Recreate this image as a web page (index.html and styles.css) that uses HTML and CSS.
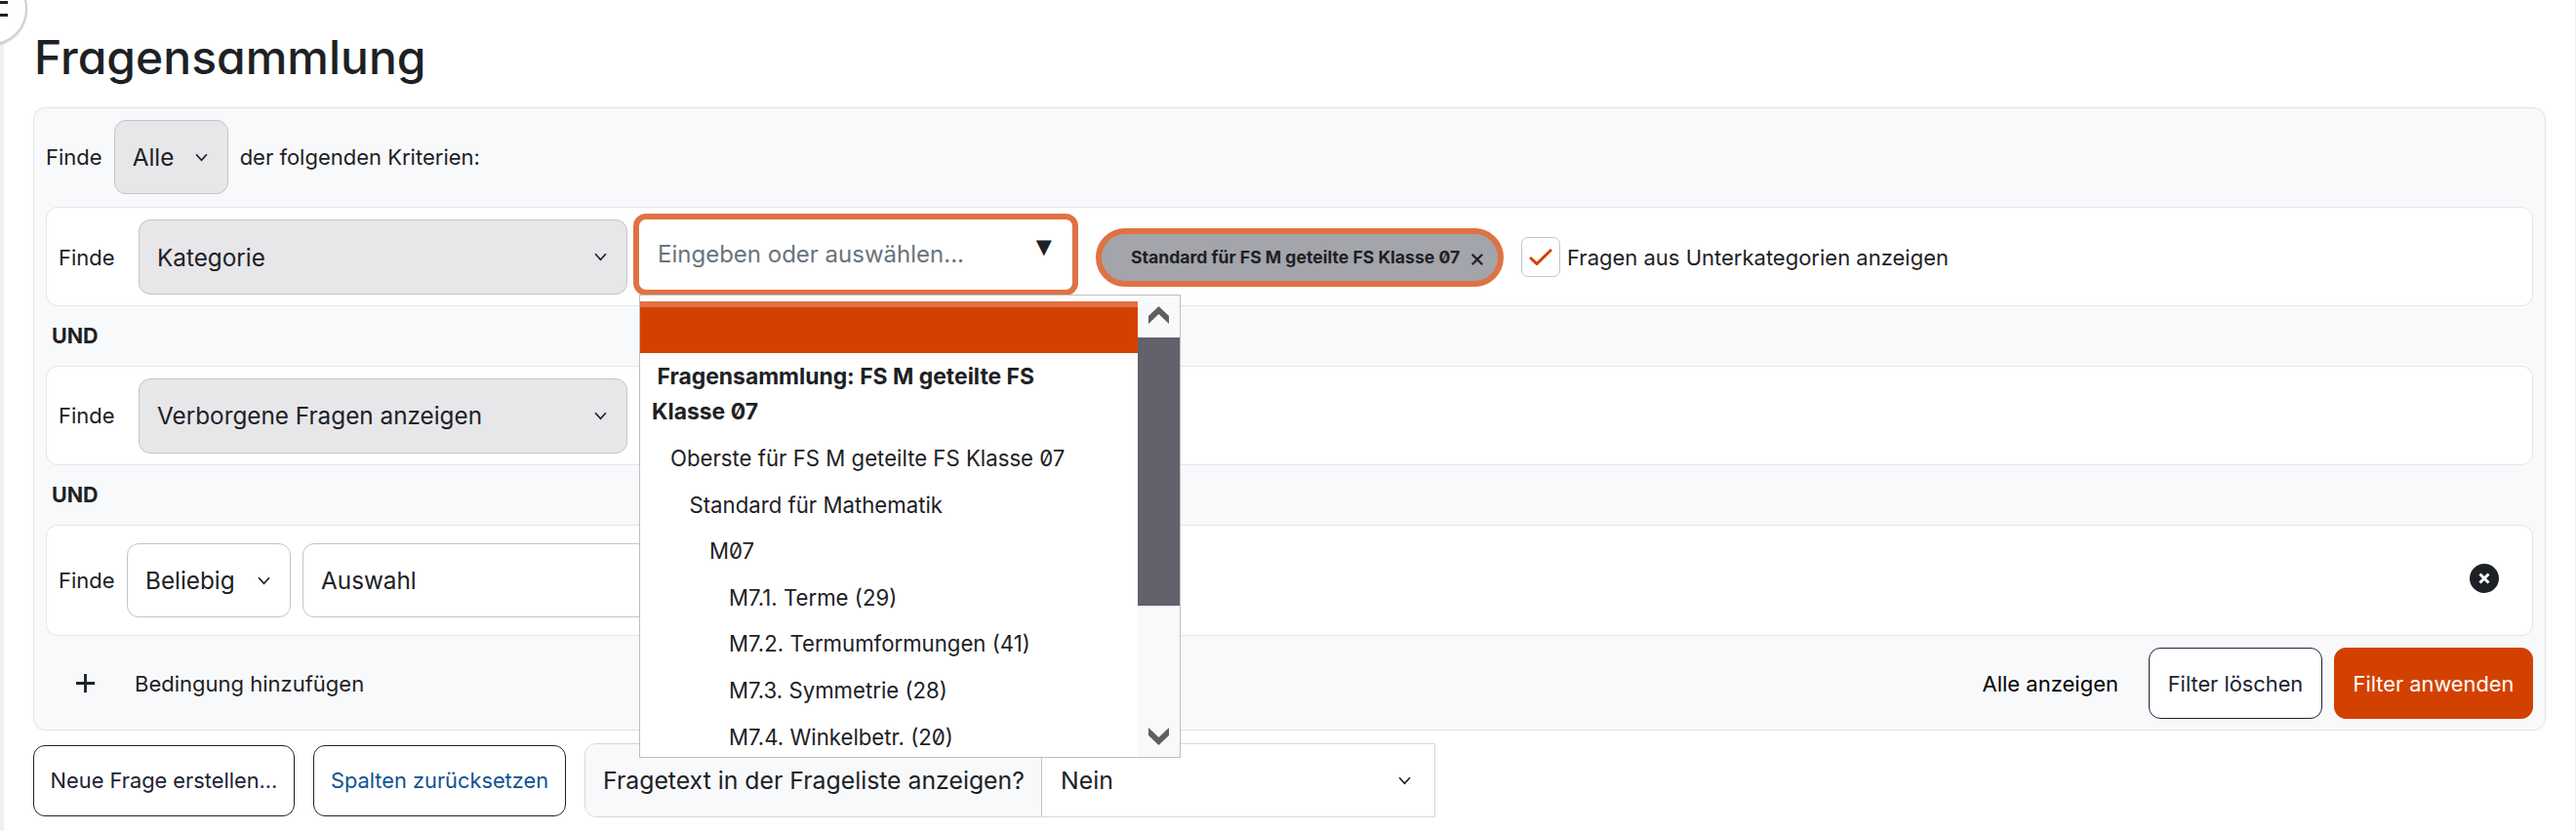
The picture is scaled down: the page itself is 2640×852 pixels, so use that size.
FILE: index.html
```html
<!DOCTYPE html>
<html lang="de">
<head>
<meta charset="utf-8">
<title>Fragensammlung</title>
<link rel="stylesheet" href="styles.css">
</head>
<body>
<button class="fab" aria-label="Menü"><span class="fab-lines"><i></i><i></i><i></i></span></button>
<main class="page">
  <h1 class="title">Fragensammlung</h1>
  <section class="panel">
    <div class="head-row">
      <span class="finde-a">Finde</span>
      <div class="sel sel-grey sel-alle"><span>Alle</span><svg class="chev" viewBox="0 0 12 8"><path d="M1 1l5 5.5L11 1"/></svg></div>
      <span>der folgenden Kriterien:</span>
    </div>
    <div class="card card-one">
      <span class="finde">Finde</span>
      <div class="sel sel-grey sel-wide"><span>Kategorie</span><svg class="chev" viewBox="0 0 12 8"><path d="M1 1l5 5.5L11 1"/></svg></div>
      <div class="combo-wrap">
        <div class="combo"><span class="placeholder">Eingeben oder auswählen...</span><span class="tri">▼</span></div>
        <div class="dropdown">
          <div class="options">
            <div class="opt-selected"></div>
            <div class="opt-group">&nbsp;Fragensammlung: FS M geteilte FS Klasse 07</div>
            <div class="opt lvl1">Oberste für FS M geteilte FS Klasse 07</div>
            <div class="opt lvl2">Standard für Mathematik</div>
            <div class="opt lvl3">M07</div>
            <div class="opt lvl4">M7.1. Terme (29)</div>
            <div class="opt lvl4">M7.2. Termumformungen (41)</div>
            <div class="opt lvl4">M7.3. Symmetrie (28)</div>
            <div class="opt lvl4">M7.4. Winkelbetr. (20)</div>
          </div>
          <div class="scrollbar">
            <div class="sb-btn"><svg class="sb-arrow" viewBox="0 0 21 18"><path d="M0 10L10.5 0 21 10v8L10.5 8 0 18z"/></svg></div>
            <div class="sb-thumb"></div>
            <div class="sb-track"></div>
            <div class="sb-btn sb-btn-down"><svg class="sb-arrow" viewBox="0 0 21 18"><path d="M0 0l10.5 10L21 0v8L10.5 18 0 8z"/></svg></div>
          </div>
        </div>
      </div>
      <div class="chip"><span>Standard für FS M geteilte FS Klasse 07</span><span class="chip-x">×</span></div>
      <div class="check"><svg viewBox="0 0 24 17"><path d="M1 9l7 6.5L23 1"/></svg></div>
      <span class="check-label">Fragen aus Unterkategorien anzeigen</span>
    </div>
    <div class="und">UND</div>
    <div class="card card-two">
      <span class="finde">Finde</span>
      <div class="sel sel-grey sel-wide"><span>Verborgene Fragen anzeigen</span><svg class="chev" viewBox="0 0 12 8"><path d="M1 1l5 5.5L11 1"/></svg></div>
    </div>
    <div class="und">UND</div>
    <div class="card card-three">
      <span class="finde">Finde</span>
      <div class="sel sel-any"><span>Beliebig</span><svg class="chev" viewBox="0 0 12 8"><path d="M1 1l5 5.5L11 1"/></svg></div>
      <div class="sel sel-choice"><span>Auswahl</span></div>
      <svg class="remove" viewBox="0 0 30 30"><circle cx="15" cy="15" r="15"/><path d="M10.5 10.5l9 9M19.5 10.5l-9 9"/></svg>
    </div>
    <div class="foot">
      <svg class="plus" viewBox="0 0 20 20"><path d="M10 0v20M0 10h20"/></svg>
      <span class="add">Bedingung hinzufügen</span>
      <span class="show-all">Alle anzeigen</span>
      <button class="btn btn-clear">Filter löschen</button>
      <button class="btn btn-apply">Filter anwenden</button>
    </div>
  </section>
  <div class="actions">
    <button class="btn btn-new">Neue Frage erstellen...</button>
    <button class="btn btn-reset">Spalten zurücksetzen</button>
    <div class="group">
      <span class="group-label">Fragetext in der Frageliste anzeigen?</span>
      <div class="group-value"><span>Nein</span><svg class="chev" viewBox="0 0 12 8"><path d="M1 1l5 5.5L11 1"/></svg></div>
    </div>
  </div>
</main>
</body>
</html>
```
FILE: styles.css
```css
* { box-sizing: border-box; }
html, body { margin: 0; padding: 0; background: #fff; }
body {
  height: 852px;
  overflow: hidden;
  position: relative;
  font-family: Inter, "Liberation Sans", sans-serif;
  font-size: 22px;
  font-feature-settings: "zero" 1;
  color: #1d2125;
}
.page {
  height: 852px;
  border-left: 4px solid #f1f1f3;
  border-right: 1px solid #f1f1f3;
  padding: 0 30px 0 30px;
}
.fab {
  position: absolute;
  left: -44px;
  top: -28px;
  width: 72px;
  height: 74px;
  border-radius: 50%;
  border: 2px solid #cfd0d2;
  background: #fff;
  box-shadow: 0 1px 2px rgba(0,0,0,.15);
  z-index: 3;
  padding: 0;
}
.fab-lines { position: absolute; left: 42px; top: 14px; display: flex; flex-direction: column; gap: 10px; width: 8px; }
.fab-lines i { display: block; height: 3px; background: #1d2125; }
.title {
  margin: 0;
  height: 110px;
  padding: 31px 0 0 1px;
  font-size: 48px;
  line-height: 56px;
  font-weight: 500;
  font-feature-settings: "cv11" 1;
}
.panel {
  height: 639px;
  border: 1px solid #e3e4e8;
  border-radius: 12px;
  background: #f8f9fa;
  padding: 12px 12px 0;
}
.head-row { display: flex; align-items: center; height: 76px; gap: 12px; margin-bottom: 13px; }
.sel {
  display: flex;
  align-items: center;
  justify-content: space-between;
  height: 77px;
  padding: 0 20px 0 18px;
  border: 1px solid #c2c4c8;
  border-radius: 12px;
  background: #fff;
  font-size: 24.3px;
}
.sel-grey { background: #e7e7ea; }
.sel-alle { width: 117px; height: 76px; }
.sel-wide { width: 501px; }
.sel-any { width: 168px; height: 76px; }
.sel-choice { width: 560px; height: 76px; margin-left: 12px; }
.chev { width: 13px; height: 9px; fill: none; stroke: #1d2125; stroke-width: 1.6; flex: none; }
.card {
  display: flex;
  align-items: center;
  background: #fff;
  border: 1px solid #e3e4e8;
  border-radius: 12px;
  padding: 0 12px;
  position: relative;
}
.card-one { height: 102px; padding-top: 1px; }
.card-two { height: 102px; }
.card-three { height: 114px; }
.finde { width: 82px; flex: none; }
.card-three .finde { width: 70px; }
.und { height: 61px; line-height: 60px; padding-left: 6px; font-weight: 700; font-size: 21.5px; }
.combo-wrap { position: relative; width: 456px; height: 84px; margin-left: 6px; margin-top: -6px; flex: none; }
.combo {
  height: 84px;
  border: 6px solid #df7244;
  border-radius: 13px;
  background: #fff;
  display: flex;
  align-items: center;
  padding: 0 24px 0 19px;
  justify-content: space-between;
}
.placeholder { color: #6a737b; font-size: 24px; }
.tri { font-size: 21px; color: #1d2125; margin-top: -14px; margin-right: -3px; line-height: 1; font-family: "DejaVu Sans", sans-serif; }
.dropdown {
  position: absolute;
  left: 6px;
  top: 83px;
  width: 555px;
  height: 475px;
  background: #fff;
  border: 1px solid #bcbdc1;
  display: flex;
  z-index: 2;
}
.options { flex: 1; overflow: hidden; padding-top: 6px; font-size: 22.2px; }
.opt-selected { height: 53px; background: #d34100; border-top: 6px solid #df7244; }
.opt-group { font-weight: 700; font-size: 22.9px; line-height: 36px; padding: 6px 40px 0 12px; }
.opt { line-height: 47.6px; white-space: nowrap; }
.lvl1 { padding-left: 31px; margin-top: 6.5px; }
.lvl2 { padding-left: 50.5px; }
.lvl3 { padding-left: 71px; }
.lvl4 { padding-left: 91px; }
.scrollbar { width: 43px; background: #f8f9fa; display: flex; flex-direction: column; flex: none; }
.sb-btn { height: 43px; display: flex; justify-content: center; padding-top: 11px; flex: none; }
.sb-btn-down { align-items: flex-start; height: 30px; padding-top: 0; }
.sb-arrow { width: 21px; height: 18px; fill: #5f5f5f; }
.sb-thumb { height: 275px; background: #62626c; flex: none; }
.sb-track { flex: 1; }
.chip {
  display: flex;
  align-items: center;
  width: 418px;
  height: 60px;
  margin-left: 18px;
  padding-left: 30px;
  border: 6px solid #df7244;
  border-radius: 30px;
  background: #a4a4ab;
  font-size: 17.6px;
  font-weight: 700;
  flex: none;
  white-space: nowrap;
}
.chip-x { margin-left: 9px; font-weight: 400; font-size: 26px; line-height: 1; }
.check {
  width: 40px;
  height: 41px;
  margin-left: 18px;
  border: 1px solid #c2c4c8;
  border-radius: 7px;
  display: flex;
  align-items: center;
  justify-content: center;
  flex: none;
}
.check svg { width: 24px; height: 17px; fill: none; stroke: #d34100; stroke-width: 3; }
.check-label { margin-left: 7px; white-space: nowrap; }
.remove { position: absolute; right: 34px; top: 39px; width: 30px; height: 30px; fill: #1d2125; stroke: none; }
.remove path { stroke: #fff; stroke-width: 3; fill: none; }
.foot { display: flex; align-items: center; height: 73px; margin-top: 12px; padding-left: 31px; }
.plus { width: 19px; height: 19px; stroke: #1d2125; stroke-width: 3; fill: none; flex: none; }
.add { margin-left: 41px; }
.show-all { margin-left: auto; margin-right: 1px; color: #000; }
.btn {
  height: 73px;
  border-radius: 12px;
  border: 1px solid #1d2134;
  background: #fff;
  font: inherit;
  font-size: 21.8px;
  font-feature-settings: inherit;
  color: #1d2134;
  padding: 0;
  flex: none;
}
.btn-clear { width: 178px; margin-left: 30px; }
.btn-apply { width: 204px; margin-left: 12px; background: #d34100; border-color: #d34100; color: #fff; }
.actions { display: flex; align-items: center; height: 76px; margin-top: 13px; }
.btn-new { width: 268px; }
.btn-reset { width: 259px; margin-left: 19px; color: #115293; }
.group {
  display: flex;
  align-items: stretch;
  width: 872px;
  height: 76px;
  margin-left: 19px;
  border: 1px solid #d6d7da;
  border-radius: 12px 0 0 12px;
  font-size: 24.8px;
}
.group-label { width: 468px; display: flex; align-items: center; padding-left: 18px; background: #f8f9fa; border-right: 1px solid #c2c4c8; border-radius: 12px 0 0 12px; }
.group-value { flex: 1; display: flex; align-items: center; justify-content: space-between; padding: 0 24px 0 19px; }
```
